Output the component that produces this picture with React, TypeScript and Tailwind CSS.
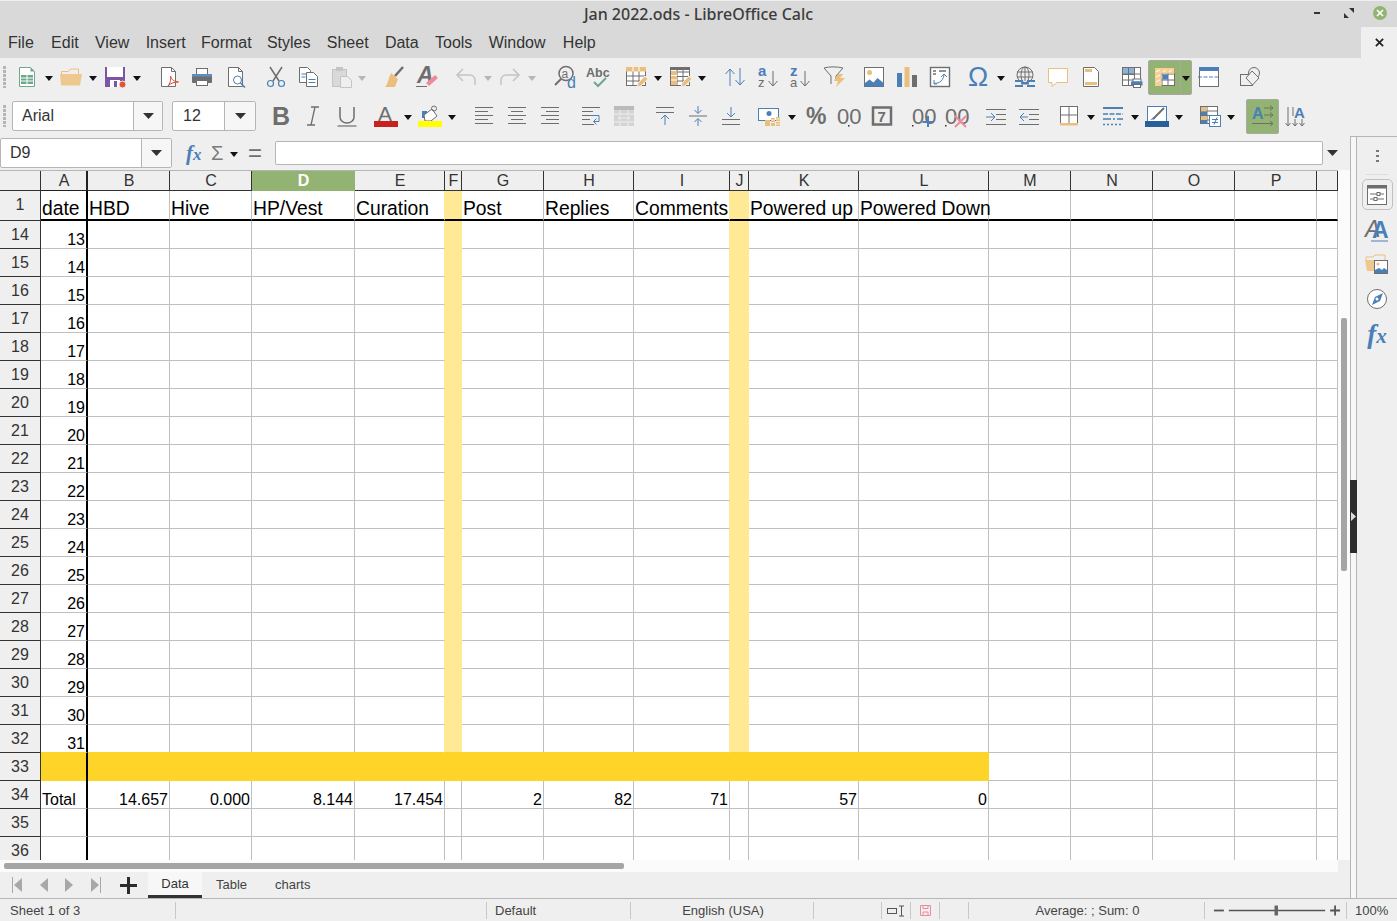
import React from "react";

const BLUE = "#4a7fb8";
const GRAY = "#6e6e6e";
const LIGHT = "#c4c4c4";
const ORANGE = "#eabf7e";
const PINK = "#ee8a9c";
const FONT = "'Liberation Sans', Arial, sans-serif";

const GRID =
  "grid grid-cols-[41px_47px_82px_82px_103px_90px_17px_82px_90px_96px_19px_110px_130px_82px_82px_82px_82px_21px]";

const columns = ["A", "B", "C", "D", "E", "F", "G", "H", "I", "J", "K", "L", "M", "N", "O", "P", ""];
const titles = ["date", "HBD", "Hive", "HP/Vest", "Curation", "", "Post", "Replies", "Comments", "", "Powered up", "Powered Down"];
const totals = ["Total", "14.657", "0.000", "8.144", "17.454", "", "2", "82", "71", "", "57", "0"];
const dateRows = Array.from({ length: 19 }, (_, i) => i + 14);

type IconProps = { className?: string; children?: React.ReactNode };

const Svg = ({ className = "", children }: IconProps) => (
  <svg viewBox="0 0 22 22" className={`w-[22px] h-[22px] shrink-0 overflow-visible ${className}`} fill="none">
    {children}
  </svg>
);

const Caret = ({ className = "" }: { className?: string }) => (
  <svg viewBox="0 0 8 5" className={`w-[8px] h-[5px] shrink-0 mt-[2px] ${className}`}>
    <path d="M0 0h8L4 5z" fill="#111" />
  </svg>
);

const BigCaret = ({ className = "" }: { className?: string }) => (
  <svg viewBox="0 0 11 6" className={`w-[11px] h-[6px] shrink-0 ${className}`}>
    <path d="M0 0h11L5.500 6z" fill="#333" />
  </svg>
);

const Grip = () => (
  <div className="w-[3px] h-[22px] shrink-0 bg-[repeating-linear-gradient(to_bottom,#b5b5b5_0,#b5b5b5_3px,transparent_3px,transparent_4px)]" />
);

const Label = ({ x, y, size, fill = GRAY, bold, italic, children }: any) => (
  <text x={x} y={y} fontSize={size} fill={fill} fontFamily={FONT} fontWeight={bold ? 700 : 400} fontStyle={italic ? "italic" : "normal"}>
    {children}
  </text>
);

const IconNew = (p: IconProps) => (
  <Svg {...p}>
    <path d="M3.500 1.500h11l4 4v15h-15z" fill="#fff" stroke="#6da88d" />
    <path d="M14.500 1.500v4h4z" fill="#6da88d" />
    <rect x="5" y="9" width="12" height="9" fill="#6da88d" />
    <path d="M5 12h12M5 15h12M11 9v9" stroke="#fff" />
  </Svg>
);
const IconOpen = (p: IconProps) => (
  <Svg {...p}>
    <path d="M1.500 8V5.500h7l2-2.500h8v5" stroke={ORANGE} />
    <path d="M0 8h22l-2 11.500H1z" fill="#efc890" />
  </Svg>
);
const IconSave = (p: IconProps) => (
  <Svg {...p}>
    <rect x="1" y="1" width="20" height="20" fill="#7c55a6" />
    <rect x="3" y="1" width="16" height="10" fill="#fff" />
    <rect x="6" y="14" width="10" height="7" fill="#fff" />
    <rect x="10" y="15" width="3" height="6" fill="#7c55a6" />
    <circle cx="18.500" cy="18.500" r="3.500" fill="#e2552e" stroke="#efefef" />
  </Svg>
);
const IconPdf = (p: IconProps) => (
  <Svg {...p}>
    <path d="M3.500 1.500h10l4 4v15h-14z" fill="#fff" stroke={GRAY} />
    <path d="M13.500 1.500v4h4" stroke={GRAY} />
    <path d="M10 20c3-4 3-8 2.500-10 1 4 4 5.500 8 6-4 0-8 1-10.500 4z" stroke="#d8432f" fill="#fff" />
  </Svg>
);
const IconPrint = (p: IconProps) => (
  <Svg {...p}>
    <rect x="5.500" y="2.500" width="11" height="6" fill="#fff" stroke={GRAY} />
    <rect x="1" y="8" width="20" height="9" rx="1" fill={GRAY} />
    <rect x="1" y="8" width="20" height="2.500" fill="#5e8fc4" />
    <rect x="5.500" y="14.500" width="11" height="5" fill="#fff" stroke={GRAY} />
  </Svg>
);
const IconPreview = (p: IconProps) => (
  <Svg {...p}>
    <path d="M3.500 1.500h10l4 4v15h-14z" fill="#fff" stroke={GRAY} />
    <path d="M13.500 1.500v4h4" stroke={GRAY} />
    <circle cx="12.500" cy="14" r="4" fill="#fff" stroke={BLUE} />
    <path d="M15.500 17l4.500 4.500" stroke={BLUE} strokeWidth="1.500" />
  </Svg>
);
const IconCut = (p: IconProps) => (
  <Svg {...p}>
    <path d="M5 1l9 14M17 1L8 15" stroke={GRAY} strokeWidth="1.500" />
    <circle cx="5.500" cy="17.500" r="3" stroke={BLUE} strokeWidth="1.200" />
    <circle cx="16.500" cy="17.500" r="3" stroke={BLUE} strokeWidth="1.200" />
  </Svg>
);
const IconCopy = (p: IconProps) => (
  <Svg {...p}>
    <path d="M1.500 1.500h8l3 3v12h-11z" fill="#fff" stroke={GRAY} />
    <path d="M8.500 6.500h7l4 4v10h-11z" fill="#fff" stroke={GRAY} />
    <path d="M3.500 8h5M3.500 11h4M10.500 13.500h7M10.500 16.500h7" stroke={BLUE} />
  </Svg>
);
const IconPaste = (p: IconProps) => (
  <Svg {...p}>
    <rect x="1.500" y="3.500" width="14" height="17" fill="#d9d9d9" stroke={LIGHT} />
    <rect x="5" y="1" width="7" height="4" fill={LIGHT} />
    <path d="M9.500 10.500h7l4 4v7h-11z" fill="#efefef" stroke={LIGHT} />
  </Svg>
);
const IconClone = (p: IconProps) => (
  <Svg {...p}>
    <path d="M21 1l-8 9" stroke={GRAY} strokeWidth="2.500" />
    <path d="M9 7l7 6-3 8H3c3-3 3-8 6-14z" fill={ORANGE} />
  </Svg>
);
const IconClear = (p: IconProps) => (
  <Svg {...p}>
    <Label x="1" y="17" size="23" bold italic>A</Label>
    <path d="M10 17l9-8 3 3-9 8z" fill={PINK} />
    <path d="M0 20.500h11" stroke={GRAY} />
  </Svg>
);
const IconUndo = (p: IconProps) => (
  <Svg {...p}>
    <path d="M20 19v-5a5 5 0 0 0-5-5H3M8 3L2 9l6 6" stroke={LIGHT} strokeWidth="1.500" />
  </Svg>
);
const IconRedo = (p: IconProps) => (
  <Svg {...p}>
    <path d="M2 19v-5a5 5 0 0 1 5-5h12M14 3l6 6-6 6" stroke={LIGHT} strokeWidth="1.500" />
  </Svg>
);
const IconFind = (p: IconProps) => (
  <Svg {...p}>
    <circle cx="12" cy="7.500" r="7" stroke={GRAY} strokeWidth="1.500" />
    <path d="M7 13l-6 6" stroke={GRAY} strokeWidth="2" />
    <Label x="7.500" y="11.500" size="12">a</Label>
    <Label x="13" y="22" size="16" fill={BLUE}>d</Label>
  </Svg>
);
const IconSpell = (p: IconProps) => (
  <Svg {...p}>
    <Label x="0" y="11" size="12.500" bold>Abc</Label>
    <path d="M8 16l4 4 8-8" stroke="#6da88d" strokeWidth="2" />
  </Svg>
);
const IconRows = (p: IconProps) => (
  <Svg {...p}>
    <rect x="1.500" y="1.500" width="19" height="18" fill="#fff" stroke={GRAY} />
    <path d="M1.500 10h19M1.500 15h19M8 5v15M14 5v15" stroke={GRAY} />
    <rect x="1" y="1" width="20" height="4.500" fill={ORANGE} />
    <path d="M8 1v4.500M14 1v4.500" stroke="#fff" />
    <path d="M12 21l1-4 7-7 3 3-7 7z" fill={ORANGE} stroke="#efefef" />
  </Svg>
);
const IconCols = (p: IconProps) => (
  <Svg {...p}>
    <rect x="1.500" y="1.500" width="19" height="18" fill="#fff" stroke={GRAY} />
    <path d="M8 1.500v18M14 1.500v18M8 6h12M8 10.500h12M8 15h12" stroke={GRAY} />
    <rect x="1" y="1" width="20" height="3" fill={GRAY} />
    <rect x="2" y="5" width="6" height="14" fill={ORANGE} />
    <path d="M2 9.500h6M2 14h6" stroke="#fff" />
    <path d="M12 21l1-4 7-7 3 3-7 7z" fill={ORANGE} stroke="#efefef" />
  </Svg>
);
const IconSort = (p: IconProps) => (
  <Svg {...p}>
    <path d="M6 20V3M1.500 8L6 3l4.500 5M16 2v17M11.500 14l4.500 5 4.500-5" stroke={BLUE} />
  </Svg>
);
const IconAz = (p: IconProps) => (
  <Svg {...p}>
    <Label x="1" y="10" size="15" fill={BLUE} bold>a</Label>
    <Label x="1" y="21" size="13">z</Label>
    <path d="M16 5v15M11.500 15l4.500 5 4.500-5" stroke={GRAY} />
  </Svg>
);
const IconZa = (p: IconProps) => (
  <Svg {...p}>
    <Label x="1" y="10" size="15" fill={BLUE} bold>z</Label>
    <Label x="1" y="21" size="13">a</Label>
    <path d="M16 5v15M11.500 15l4.500 5 4.500-5" stroke={GRAY} />
  </Svg>
);
const IconFilter = (p: IconProps) => (
  <Svg {...p}>
    <path d="M1 2c5-1.500 13-1.500 19 0l-7 8v5" stroke={GRAY} />
    <path d="M1 2l7 8v8" stroke={GRAY} />
    <path d="M15 8l5 0-3 4h5l-9 9 2-6h-4z" fill={ORANGE} />
  </Svg>
);
const IconImage = (p: IconProps) => (
  <Svg {...p}>
    <rect x="1.500" y="1.500" width="19" height="19" fill="#fff" stroke={GRAY} />
    <circle cx="6.500" cy="6.500" r="2.500" fill={ORANGE} />
    <path d="M1.500 20.500v-3l5-4 4 3 4-4.500 6 5v3.500z" fill={BLUE} />
  </Svg>
);
const IconChart = (p: IconProps) => (
  <Svg {...p}>
    <rect x="1" y="7" width="5" height="14" fill={BLUE} />
    <rect x="8.500" y="1" width="5" height="20" fill={ORANGE} />
    <rect x="16" y="9" width="5" height="12" fill={GRAY} />
  </Svg>
);
const IconPivot = (p: IconProps) => (
  <Svg {...p}>
    <rect x="1.500" y="1.500" width="19" height="19" fill="#fff" stroke={GRAY} strokeWidth="1.400" />
    <path d="M4 5h3M4 8h3M10 5h7" stroke={GRAY} strokeWidth="1.500" />
    <path d="M5 17c3 1 9-1 10-8M12 11l3-3 3 3M5 14v4h3" stroke={BLUE} />
  </Svg>
);
const IconOmega = (p: IconProps) => (
  <Svg {...p}>
    <Label x="0" y="20" size="27" fill={BLUE}>Ω</Label>
  </Svg>
);
const IconLink = (p: IconProps) => (
  <Svg {...p}>
    <circle cx="11" cy="9" r="8" stroke={GRAY} />
    <ellipse cx="11" cy="9" rx="4" ry="8" stroke={GRAY} />
    <path d="M3 6h16M3 11h16M11 1v14" stroke={GRAY} />
    <path d="M1 15h8M13 15h8M1 20h8M13 20h8M7 17.500h8" stroke={BLUE} strokeWidth="2" />
  </Svg>
);
const IconComment = (p: IconProps) => (
  <Svg {...p}>
    <path d="M1.500 2.500h19v14H10l-5 4v-4H1.500z" fill="#fff" stroke={ORANGE} />
  </Svg>
);
const IconHeader = (p: IconProps) => (
  <Svg {...p}>
    <path d="M3.500 1.500h11l4 4v15h-15z" fill="#fff" stroke={GRAY} />
    <rect x="5" y="3" width="7" height="3" fill={ORANGE} />
    <rect x="5" y="16" width="12" height="3" fill={ORANGE} />
  </Svg>
);
const IconPrintArea = (p: IconProps) => (
  <Svg {...p}>
    <rect x="1.500" y="1.500" width="18" height="18" fill="#fff" stroke={GRAY} />
    <rect x="1.500" y="1.500" width="12" height="7" fill="#8db2d9" stroke={GRAY} />
    <path d="M7.500 1.500v18M13.500 1.500v18M1.500 8h18M1.500 14h18" stroke={GRAY} />
    <rect x="12" y="13" width="8" height="3" fill="#fff" stroke={GRAY} />
    <rect x="10" y="15.500" width="11.500" height="4" fill={BLUE} />
    <rect x="12.500" y="18.500" width="7" height="3" fill="#fff" stroke={GRAY} />
  </Svg>
);
const IconFreeze = (p: IconProps) => (
  <Svg {...p}>
    <rect x="1.500" y="2.500" width="19" height="17" fill="#fff" stroke={GRAY} />
    <path d="M8 2.500v17M14 2.500v17M1.500 8h19M1.500 14h19" stroke={GRAY} />
    <path d="M1 2h6.500v18H1zM7.500 2h13v5.500h-13z" fill="#f5cf93" />
    <rect x="8.500" y="8.500" width="5.500" height="5" fill={BLUE} />
    <path d="M2 6l4-2M2 11l4-2M2 16l4-2M9 6l3-2M15 6l3-2" stroke="#fff" />
  </Svg>
);
const IconSplit = (p: IconProps) => (
  <Svg {...p}>
    <rect x="1.500" y="1.500" width="19" height="19" fill="#fff" stroke={GRAY} />
    <rect x="1" y="1" width="20" height="4" fill={BLUE} />
    <path d="M0 11h22" stroke={BLUE} strokeDasharray="4 1.500" />
  </Svg>
);
const IconShapes = (p: IconProps) => (
  <Svg {...p}>
    <circle cx="15" cy="7" r="5.500" fill="#efefef" stroke={GRAY} />
    <rect x="1.500" y="8.500" width="12" height="11" fill="#efefef" stroke={GRAY} />
    <path d="M13 5l7 7-6.500 7L7 12z" fill="#efefef" stroke={GRAY} />
  </Svg>
);

const IconBold = (p: IconProps) => (
  <Svg {...p}>
    <Label x="2" y="20" size="25" bold>B</Label>
  </Svg>
);
const IconItalic = (p: IconProps) => (
  <Svg {...p}>
    <path d="M9 2h8M5 20h8M13 2L9 20" stroke={GRAY} strokeWidth="1.300" />
  </Svg>
);
const IconUnderline = (p: IconProps) => (
  <Svg {...p}>
    <path d="M4 2v10a7 6 0 0 0 14 0V2" stroke={GRAY} strokeWidth="1.500" />
    <path d="M1.500 21h19" stroke={GRAY} strokeWidth="1.200" />
  </Svg>
);
const IconFontColor = (p: IconProps) => (
  <Svg {...p}>
    <Label x="3" y="16" size="21">A</Label>
    <rect x="-1" y="16" width="24" height="6" fill="#c9211e" />
  </Svg>
);
const IconHighlight = (p: IconProps) => (
  <Svg {...p}>
    <rect x="3" y="6" width="5" height="7" fill={BLUE} />
    <path d="M5 10l8-6 5 7-6 5H6z" fill="#fff" stroke={GRAY} />
    <circle cx="15" cy="3.500" r="2.500" stroke={GRAY} />
    <rect x="-1" y="16" width="24" height="6" fill="#ffff00" />
  </Svg>
);
const IconAlignLeft = (p: IconProps) => (
  <Svg {...p}>
    <path d="M2 2.500h18M2 6.500h13M2 10.500h18M2 14.500h13M2 18.500h18" stroke={GRAY} />
  </Svg>
);
const IconAlignCenter = (p: IconProps) => (
  <Svg {...p}>
    <path d="M2 2.500h18M5 6.500h12M2 10.500h18M5 14.500h12M2 18.500h18" stroke={GRAY} />
  </Svg>
);
const IconAlignRight = (p: IconProps) => (
  <Svg {...p}>
    <path d="M2 2.500h18M7 6.500h13M2 10.500h18M7 14.500h13M2 18.500h18" stroke={GRAY} />
  </Svg>
);
const IconWrap = (p: IconProps) => (
  <Svg {...p}>
    <path d="M2 2.500h18M2 6.500h11M2 10.500h8M2 14.500h8M2 19.500h12" stroke={GRAY} />
    <path d="M10 10.500h9v6h-5M16.500 13.500l-3 3 3 3" stroke={BLUE} />
  </Svg>
);
const IconMerge = (p: IconProps) => (
  <Svg {...p}>
    <rect x="1" y="1" width="20" height="20" fill="#d4d4d4" />
    <rect x="1" y="1" width="20" height="4" fill="#bbbbbb" />
    <path d="M1 9h20M1 17h20M7 5v4M15 5v4M7 17v4M15 17v4" stroke="#efefef" />
    <path d="M5 13h12M8 10.500L5 13l3 2.500M14 10.500l3 2.500-3 2.500" stroke="#efefef" />
  </Svg>
);
const IconAlignTop = (p: IconProps) => (
  <Svg {...p}>
    <path d="M2 2.500h18M2 7.500h18" stroke={GRAY} />
    <path d="M11 20V10M7 14l4-4 4 4" stroke={BLUE} />
  </Svg>
);
const IconAlignMid = (p: IconProps) => (
  <Svg {...p}>
    <path d="M2 11h18" stroke={GRAY} />
    <path d="M11 1v7M7.500 5L11 8.500 14.500 5M11 21v-7M7.500 17l3.500-3.500 3.500 3.500" stroke={BLUE} />
  </Svg>
);
const IconAlignBottom = (p: IconProps) => (
  <Svg {...p}>
    <path d="M2 14.500h18M2 19.500h18" stroke={GRAY} />
    <path d="M11 2v10M7 8l4 4 4-4" stroke={BLUE} />
  </Svg>
);
const IconCurrency = (p: IconProps) => (
  <Svg {...p}>
    <rect x="0.500" y="3.500" width="20" height="12" fill="#fff" stroke={BLUE} />
    <circle cx="11" cy="8.500" r="2.500" fill={BLUE} />
    <path d="M7 15h5v6H7zM13 13h4v8h-4zM18 12h4v9h-4z" fill={ORANGE} />
    <path d="M13 15h4M13 17.500h4M18 14h4M18 16.500h4M18 19h4" stroke="#fff" strokeWidth="0.700" />
  </Svg>
);
const IconPercent = (p: IconProps) => (
  <Svg {...p}>
    <Label x="1" y="19" size="23" bold>%</Label>
  </Svg>
);
const IconNumber = (p: IconProps) => (
  <Svg {...p}>
    <Label x="-1" y="19" size="22">00</Label>
    <rect x="10" y="20" width="1.500" height="1.500" fill="#333" />
  </Svg>
);
const IconDate = (p: IconProps) => (
  <Svg {...p}>
    <rect x="2" y="2.500" width="18" height="17" stroke={GRAY} strokeWidth="2.500" />
    <Label x="6.500" y="16.500" size="15" bold>7</Label>
  </Svg>
);
const IconAddDec = (p: IconProps) => (
  <Svg {...p}>
    <Label x="0" y="19" size="22">00</Label>
    <rect x="0" y="20" width="1.500" height="1.500" fill="#333" />
    <path d="M16 11v11M10.500 17h11" stroke={BLUE} strokeWidth="2" />
  </Svg>
);
const IconRemDec = (p: IconProps) => (
  <Svg {...p}>
    <Label x="0" y="19" size="22">00</Label>
    <rect x="0" y="20" width="1.500" height="1.500" fill="#333" />
    <path d="M10 11l11 11M21 11L10 22" stroke={PINK} strokeWidth="2" />
  </Svg>
);
const IconIndent = (p: IconProps) => (
  <Svg {...p}>
    <path d="M1 4.500h20M11 9.500h10M11 14.500h10M1 19.500h20" stroke={GRAY} />
    <path d="M1 12h8M6 8l4 4-4 4" stroke={BLUE} />
  </Svg>
);
const IconOutdent = (p: IconProps) => (
  <Svg {...p}>
    <path d="M1 4.500h20M11 9.500h10M11 14.500h10M1 19.500h20" stroke={GRAY} />
    <path d="M10 12H2M6 8l-4 4 4 4" stroke={BLUE} />
  </Svg>
);
const IconBorder = (p: IconProps) => (
  <Svg {...p}>
    <rect x="2.500" y="1.500" width="17" height="17" fill="#fff" stroke={GRAY} />
    <path d="M11 1.500v17M2.500 10h17" stroke={GRAY} />
    <rect x="2" y="18" width="18" height="2.500" fill={ORANGE} />
  </Svg>
);
const IconBorderStyle = (p: IconProps) => (
  <Svg {...p}>
    <path d="M1 3h20" stroke={BLUE} strokeWidth="2" />
    <path d="M1 9h20" stroke={BLUE} strokeWidth="1.500" strokeDasharray="5 1.500" />
    <path d="M1 14h20" stroke={BLUE} strokeWidth="1.500" strokeDasharray="8 2 2 2" />
    <path d="M1 19.500h20" stroke={BLUE} strokeWidth="1.500" strokeDasharray="2 2" />
  </Svg>
);
const IconBorderColor = (p: IconProps) => (
  <Svg {...p}>
    <rect x="1.500" y="1.500" width="19" height="15" fill="#fff" stroke={BLUE} />
    <path d="M18 3L7 14" stroke={GRAY} strokeWidth="2" />
    <path d="M4 15l4-3 1 2z" fill={BLUE} />
    <rect x="-1" y="16" width="24" height="6" fill="#2a6099" />
  </Svg>
);
const IconCond = (p: IconProps) => (
  <Svg {...p}>
    <rect x="1.500" y="1.500" width="17" height="17" fill="#fff" stroke={GRAY} />
    <path d="M8 1.500v17M1.500 6h17M1.500 10.500h17M1.500 15h17" stroke={GRAY} />
    <rect x="2" y="2" width="6" height="4" fill={ORANGE} />
    <rect x="2" y="6.500" width="6" height="4" fill={BLUE} />
    <rect x="2" y="11" width="6" height="4" fill={ORANGE} />
    <rect x="2" y="15" width="6" height="3.500" fill={BLUE} />
    <rect x="10.500" y="10.500" width="11" height="11" fill="#fff" stroke={BLUE} />
    <path d="M13 14.500h6M13 17.500h6M18 12.500l-3 7" stroke={BLUE} />
  </Svg>
);
const IconTextLtr = (p: IconProps) => (
  <Svg {...p}>
    <Label x="0" y="14" size="16" fill={BLUE} bold>A</Label>
    <path d="M12 3h9M18 0.500L21 3l-3 2.500M12 10h9M18 7.500l3 2.500-3 2.500M0 18.500h21M18 16l3 2.500-3 2.500" stroke={GRAY} />
  </Svg>
);
const IconTextVert = (p: IconProps) => (
  <Svg {...p}>
    <Label x="9" y="13" size="15" fill={BLUE} bold>A</Label>
    <path d="M3 2v19M0.500 18L3 21l2.500-3M10 14v7M7.500 18l2.500 3 2.500-3M17 14v7M14.500 18l2.500 3 2.500-3M8 2v9" stroke={GRAY} />
  </Svg>
);

const IconDeck = () => (
  <svg viewBox="0 0 20 20" className="w-[20px] h-[20px]" fill="none">
    <rect x="0.500" y="0.500" width="19" height="19" fill="#fff" stroke={GRAY} />
    <rect x="0" y="0" width="20" height="3.500" fill={GRAY} />
    <path d="M3 9h14M3 14h14" stroke={GRAY} />
    <rect x="10" y="7.500" width="3" height="3" fill="#fff" stroke={GRAY} />
    <rect x="7" y="12.500" width="3" height="3" fill="#fff" stroke={GRAY} />
  </svg>
);
const IconStyles = () => (
  <svg viewBox="0 0 22 24" className="w-[22px] h-[24px] overflow-visible" fill="none">
    <text x="-1" y="19" fontSize="23" fill={GRAY} fontFamily={FONT} fontStyle="italic">A</text>
    <text x="6" y="20" fontSize="23" fill={BLUE} fontFamily={FONT} fontWeight="700">A</text>
    <path d="M5 23h17" stroke={BLUE} />
  </svg>
);
const IconGallery = () => (
  <svg viewBox="0 0 24 22" className="w-[24px] h-[22px]" fill="none">
    <path d="M1 8V5h7l2-2h10v5" stroke={ORANGE} />
    <path d="M0 8h20l-2 11H2z" fill="#efc890" />
    <rect x="9.500" y="8.500" width="13" height="13" fill="#fff" stroke={GRAY} />
    <circle cx="13" cy="12" r="1.500" fill={ORANGE} />
    <path d="M10 21v-3l4-2 3 2 2-2 3 2v3z" fill={BLUE} />
  </svg>
);
const IconNavigator = () => (
  <svg viewBox="0 0 22 22" className="w-[22px] h-[22px]" fill="none">
    <circle cx="11" cy="11" r="9.500" fill="#fff" stroke={GRAY} />
    <path d="M17 5l-3 8-8 4 3-8z" fill={BLUE} />
    <circle cx="11" cy="11" r="1.500" fill="#fff" />
  </svg>
);

const ToolbarOne = () => (
  <div className="h-[38px] flex items-center pl-[3px] bg-[#efefef]">
    <Grip />
    <IconNew className="ml-[10px]" />
    <Caret className="ml-[7px]" />
    <IconOpen className="ml-[7px]" />
    <Caret className="ml-[7px]" />
    <IconSave className="ml-[7px]" />
    <Caret className="ml-[7px]" />
    <IconPdf className="ml-[17px]" />
    <IconPrint className="ml-[11px]" />
    <IconPreview className="ml-[12px]" />
    <IconCut className="ml-[18px]" />
    <IconCopy className="ml-[11px]" />
    <IconPaste className="ml-[11px]" />
    <Caret className="ml-[5px] opacity-25" />
    <IconClone className="ml-[16px]" />
    <IconClear className="ml-[12px]" />
    <IconUndo className="ml-[17px]" />
    <Caret className="ml-[7px] opacity-25" />
    <IconRedo className="ml-[7px]" />
    <Caret className="ml-[7px] opacity-25" />
    <IconFind className="ml-[18px]" />
    <IconSpell className="ml-[10px]" />
    <IconRows className="ml-[17px]" />
    <Caret className="ml-[7px]" />
    <IconCols className="ml-[7px]" />
    <Caret className="ml-[7px]" />
    <IconSort className="ml-[18px]" />
    <IconAz className="ml-[11px]" />
    <IconZa className="ml-[10px]" />
    <IconFilter className="ml-[12px]" />
    <IconImage className="ml-[18px]" />
    <IconChart className="ml-[11px]" />
    <IconPivot className="ml-[11px]" />
    <IconOmega className="ml-[17px]" />
    <Caret className="ml-[7px]" />
    <IconLink className="ml-[9px]" />
    <IconComment className="ml-[11px]" />
    <IconHeader className="ml-[11px]" />
    <IconPrintArea className="ml-[19px]" />
    <div className="ml-[5px] flex h-[35px] rounded-[2px] border border-[#a8a8a8] bg-[#92b372]">
      <div className="w-[32px] flex items-center justify-center border-r border-[#a8a8a8]">
        <IconFreeze />
      </div>
      <div className="w-[10px] flex items-center justify-center">
        <Caret />
      </div>
    </div>
    <IconSplit className="ml-[6px]" />
    <IconShapes className="ml-[19px]" />
  </div>
);

const Combo = ({ text, className, labelClass }: { text: string; className: string; labelClass: string }) => (
  <div className={`flex h-[30px] rounded-[2px] border border-[#b5b5b5] bg-white text-[16px] text-[#333] ${className}`}>
    <div className={`flex items-center border-r border-[#b5b5b5] ${labelClass}`}>{text}</div>
    <div className="flex-1 flex items-center justify-center bg-[#f6f6f6]">
      <BigCaret />
    </div>
  </div>
);

const ToolbarTwo = () => (
  <div className="h-[40px] flex items-center pl-[3px] bg-[#efefef]">
    <Grip />
    <Combo text="Arial" className="ml-[6px] w-[151px]" labelClass="w-[121px] pl-[9px]" />
    <Combo text="12" className="ml-[9px] w-[84px]" labelClass="w-[52px] pl-[10px]" />
    <IconBold className="ml-[14px]" />
    <IconItalic className="ml-[10px]" />
    <IconUnderline className="ml-[12px]" />
    <IconFontColor className="ml-[17px]" />
    <Caret className="ml-[7px]" />
    <IconHighlight className="ml-[7px]" />
    <Caret className="ml-[7px]" />
    <IconAlignLeft className="ml-[17px]" />
    <IconAlignCenter className="ml-[11px]" />
    <IconAlignRight className="ml-[11px]" />
    <IconWrap className="ml-[19px]" />
    <IconMerge className="ml-[11px]" />
    <IconAlignTop className="ml-[19px]" />
    <IconAlignMid className="ml-[11px]" />
    <IconAlignBottom className="ml-[11px]" />
    <IconCurrency className="ml-[16px]" />
    <Caret className="ml-[8px]" />
    <IconPercent className="ml-[9px]" />
    <IconNumber className="ml-[11px]" />
    <IconDate className="ml-[11px]" />
    <IconAddDec className="ml-[19px]" />
    <IconRemDec className="ml-[11px]" />
    <IconIndent className="ml-[18px]" />
    <IconOutdent className="ml-[11px]" />
    <IconBorder className="ml-[18px]" />
    <Caret className="ml-[7px]" />
    <IconBorderStyle className="ml-[7px]" />
    <Caret className="ml-[7px]" />
    <IconBorderColor className="ml-[7px]" />
    <Caret className="ml-[7px]" />
    <IconCond className="ml-[16px]" />
    <Caret className="ml-[6px]" />
    <div className="ml-[11px] w-[33px] h-[35px] flex items-center justify-center rounded-[2px] border border-[#a8a8a8] bg-[#92b372]">
      <IconTextLtr />
    </div>
    <IconTextVert className="ml-[6px]" />
  </div>
);

const FormulaBar = () => (
  <div className="h-[34px] flex items-center bg-[#efefef]">
    <div className="w-[172px] h-[30px] flex rounded-[2px] border border-[#b5b5b5] bg-white text-[16px] text-[#333]">
      <div className="w-[141px] flex items-center pl-[9px] border-r border-[#b5b5b5]">D9</div>
      <div className="flex-1 flex items-center justify-center bg-[#f6f6f6]">
        <BigCaret />
      </div>
    </div>
    <span className="ml-[14px] w-[17px] flex items-baseline italic font-bold leading-none text-[#4a7fb8] font-['Liberation_Serif',serif]">
      <span className="text-[21px]">f</span>
      <span className="text-[17px]">x</span>
    </span>
    <span className="ml-[8px] w-[13px] text-[20px] leading-none text-[#7a7a7a]">Σ</span>
    <Caret className="ml-[6px]" />
    <span className="ml-[10px] w-[14px] text-[24px] leading-none text-[#6e6e6e]">=</span>
    <div className="ml-[13px] w-[1048px] h-[24px] rounded-[2px] border border-[#b5b5b5] bg-white" />
    <BigCaret className="ml-[4px]" />
  </div>
);

const ColumnHeader = () => (
  <div className={`${GRID} h-[21px] border-t border-[#b5b5b5] bg-[#efefef] text-[16px] leading-[18px] text-[#333]`}>
    <div className="border-r border-b border-[#333]" />
    {columns.map((c, i) =>
      c === "D" ? (
        <div key={i} className="flex items-center justify-center border-b border-[#92b372] bg-[#92b372] font-bold text-white">
          {c}
        </div>
      ) : c === "A" ? (
        <div key={i} className="flex items-center justify-center pl-[1px] border-r-2 border-b border-[#222]">
          {c}
        </div>
      ) : (
        <div key={i} className="flex items-center justify-center pl-[1px] border-r border-b border-[#333]">
          {c}
        </div>
      )
    )}
  </div>
);

const RowLabel = ({ n }: { n: number }) => (
  <div className="flex items-center justify-center border-r border-b border-[#333] bg-[#efefef] text-[16px] text-[#333]">{n}</div>
);

const TitleRow = () => (
  <div className={`${GRID} h-[30px]`}>
    <div className="flex items-center justify-center pb-[2px] border-r border-b border-[#333] bg-[#efefef] text-[16px] text-[#333]">1</div>
    {columns.map((c, i) => {
      const yellow = c === "F" || c === "J";
      const beforeYellow = c === "E" || c === "I";
      return (
        <div
          key={i}
          className={`flex items-end whitespace-nowrap pl-[1px] text-[19.300px] leading-[20px] text-black border-b-2 border-b-black ${
            yellow
              ? "bg-[#ffe994]"
              : c === "A"
                ? "border-r-2 border-r-black"
                : beforeYellow
                  ? "border-r border-r-[#ffe994]"
                  : "border-r border-r-[#c0c0c0]"
          }`}
        >
          {titles[i]}
        </div>
      );
    })}
  </div>
);

const DateRow = ({ n }: { n: number }) => (
  <div className={`${GRID} h-[28px]`}>
    <RowLabel n={n} />
    {columns.map((c, i) => {
      const last = n === 32 && i < 12;
      const bottom = last ? "border-b border-b-[#ffd428]" : "border-b border-b-[#c0c0c0]";
      if (c === "F" || c === "J") {
        return <div key={i} className={`bg-[#ffe994] ${last ? "border-b border-b-[#ffd428]" : ""}`} />;
      }
      if (c === "A") {
        return (
          <div key={i} className={`flex items-end justify-end pr-[1px] text-[16px] leading-[16px] text-black border-r-2 border-r-black ${bottom}`}>
            {n - 1}
          </div>
        );
      }
      if (c === "E" || c === "I") {
        return <div key={i} className={`border-r border-r-[#ffe994] ${bottom}`} />;
      }
      return <div key={i} className={`border-r border-r-[#c0c0c0] ${bottom}`} />;
    })}
  </div>
);

const BandRow = () => (
  <div className={`${GRID} h-[28px]`}>
    <RowLabel n={33} />
    {columns.map((c, i) =>
      c === "A" ? (
        <div key={i} className="bg-[#ffd428] border-r-2 border-r-black" />
      ) : i < 12 ? (
        <div key={i} className="bg-[#ffd428]" />
      ) : (
        <div key={i} className="border-r border-b border-[#c0c0c0]" />
      )
    )}
  </div>
);

const TotalRow = () => (
  <div className={`${GRID} h-[28px]`}>
    <RowLabel n={34} />
    {columns.map((c, i) =>
      c === "A" ? (
        <div key={i} className="flex items-end pl-[1px] text-[16px] leading-[16px] text-black border-r-2 border-r-black border-b border-b-[#c0c0c0]">
          {totals[i]}
        </div>
      ) : (
        <div key={i} className="flex items-end justify-end pr-[1px] text-[16px] leading-[16px] text-black border-r border-b border-[#c0c0c0]">
          {totals[i] ?? ""}
        </div>
      )
    )}
  </div>
);

const EmptyRow = ({ n }: { n: number }) => (
  <div className={`${GRID} h-[28px]`}>
    <RowLabel n={n} />
    {columns.map((c, i) =>
      c === "A" ? (
        <div key={i} className="border-r-2 border-r-black border-b border-b-[#c0c0c0]" />
      ) : (
        <div key={i} className="border-r border-b border-[#c0c0c0]" />
      )
    )}
  </div>
);

const Sheet = () => (
  <div className="h-[690px] flex">
    <div className="w-[1338px] h-full overflow-hidden bg-white">
      <ColumnHeader />
      <TitleRow />
      {dateRows.map((n) => (
        <DateRow key={n} n={n} />
      ))}
      <BandRow />
      <TotalRow />
      <EmptyRow n={35} />
      <EmptyRow n={36} />
    </div>
    <div className="w-[12px] h-full bg-[#fbfbfb] pt-[148px] pl-[3px]">
      <div className="w-[6px] h-[253px] rounded-[2px] bg-[#a5a5a5]" />
    </div>
  </div>
);

const NavIcon = ({ d, bar, className = "" }: { d: string; bar?: "l" | "r"; className?: string }) => (
  <svg viewBox="0 0 12 16" className={`w-[12px] h-[16px] ${className}`}>
    <path d={d} fill="#a8a8a8" />
    {bar === "l" && <rect x="0" y="0" width="1" height="16" fill="#a8a8a8" />}
    {bar === "r" && <rect x="11" y="0" width="1" height="16" fill="#a8a8a8" />}
  </svg>
);

const Tabs = () => (
  <div className="h-[26px] flex items-stretch bg-[#efefef] text-[13px] text-[#444]">
    <div className="w-[148px] flex items-center pl-[12px]">
      <NavIcon d="M2 8l8-7v14z" bar="l" />
      <NavIcon d="M2 8l8-7v14z" className="ml-[14px]" />
      <NavIcon d="M3 1l8 7-8 7z" className="ml-[12px]" />
      <NavIcon d="M2 1l8 7-8 7z" bar="r" className="ml-[15px]" />
      <svg viewBox="0 0 17 17" className="ml-[19px] w-[17px] h-[17px]">
        <path d="M8.500 0v17M0 8.500h17" stroke="#2b2b2b" strokeWidth="3" />
      </svg>
    </div>
    <div className="w-[54px] flex items-center justify-center bg-[#f7f7f7] border-b-[3px] border-[#333] text-[#333]">Data</div>
    <div className="ml-[14px] flex items-center">Table</div>
    <div className="ml-[28px] flex items-center">charts</div>
  </div>
);

const StatusSep = ({ className, children }: { className: string; children?: React.ReactNode }) => (
  <div className={`h-[17px] flex items-center border-l border-[#c8c8c8] ${className}`}>{children}</div>
);

const StatusBar = () => (
  <div className="h-[23px] flex items-center pt-[1px] border-t border-[#b5b5b5] bg-[#efefef] text-[13px] text-[#444]">
    <div className="w-[175px] pl-[10px]">Sheet 1 of 3</div>
    <StatusSep className="w-[311px]" />
    <StatusSep className="w-[144px] pl-[8px]">Default</StatusSep>
    <StatusSep className="w-[183px] justify-center pl-[2px]">English (USA)</StatusSep>
    <StatusSep className="w-[68px]" />
    <StatusSep className="w-[29px] justify-center">
      <svg viewBox="0 0 18 12" className="w-[18px] h-[12px]" fill="none">
        <rect x="0.500" y="3.500" width="9" height="5" stroke="#555" />
        <path d="M12 1h5M14.500 1v10M12 11h5" stroke="#555" />
      </svg>
    </StatusSep>
    <StatusSep className="w-[29px] justify-center">
      <svg viewBox="0 0 11 11" className="w-[11px] h-[11px]" fill="none">
        <path d="M0.500 0.500h10v10h-10z" stroke="#ee8a9c" />
        <path d="M3 0.500v3h5v-3M3 10.500V7h5v3.500" stroke="#ee8a9c" />
      </svg>
    </StatusSep>
    <StatusSep className="w-[29px]" />
    <StatusSep className="w-[236px] justify-center pl-[2px]">Average: ; Sum: 0</StatusSep>
    <StatusSep className="w-[142px]">
      <svg viewBox="0 0 142 17" className="w-[142px] h-[17px]" fill="none">
        <path d="M24 8.500h97" stroke="#555" strokeWidth="1.300" />
        <path d="M126 8.500h10M131 3.500v10" stroke="#555" strokeWidth="1.800" />
        <path d="M9 8.500h10" stroke="#555" strokeWidth="1.800" />
        <rect x="70" y="3.500" width="3.500" height="10" fill="#666" />
      </svg>
    </StatusSep>
    <StatusSep className="flex-1 pl-[8px]">100%</StatusSep>
  </div>
);

const Sidebar = () => (
  <div className="w-[47px] flex border-t border-[#b5b5b5] bg-[#efefef]">
    <div className="w-[7px] border-x border-[#b5b5b5] bg-[#f7f7f7]" />
    <div className="w-[40px] flex flex-col items-center pt-[13px]">
      <div className="flex flex-col gap-[3px]">
        <div className="w-[3px] h-[2px] bg-[#777]" />
        <div className="w-[3px] h-[2px] bg-[#777]" />
        <div className="w-[3px] h-[2px] bg-[#777]" />
      </div>
      <div className="mt-[12px] w-[22px] h-px bg-[#dcdcdc]" />
      <div className="mt-[4px] w-[31px] h-[31px] flex items-center justify-center rounded-[5px] border border-[#c0c0c0]">
        <IconDeck />
      </div>
      <div className="mt-[8px] h-[24px]"><IconStyles /></div>
      <div className="mt-[10px] h-[22px]"><IconGallery /></div>
      <div className="mt-[14px] h-[22px]"><IconNavigator /></div>
      <span className="mt-[9px] flex items-baseline italic font-bold leading-[30px] text-[#4a7fb8] font-['Liberation_Serif',serif]">
        <span className="text-[27px]">f</span>
        <span className="text-[21px]">x</span>
      </span>
    </div>
  </div>
);

export default function App() {
  return (
    <div className="relative w-[1397px] h-[921px] overflow-hidden bg-[#efefef] font-['Liberation_Sans',Arial,sans-serif]">
      <div className="h-[27px] flex items-center justify-center border-t border-[#efefef] bg-[#d9d9d9] relative">
        <span className="font-['Noto_Sans',sans-serif] font-medium text-[16px] text-[#3c3c3c]">Jan 2022.ods - LibreOffice Calc</span>
        <div className="absolute right-[10px] top-[5px] flex items-center">
          <svg viewBox="0 0 10 10" className="w-[10px] h-[10px]">
            <rect x="2" y="4" width="6" height="2" fill="#333" />
          </svg>
          <svg viewBox="0 0 10 10" className="ml-[22px] w-[10px] h-[10px]">
            <path d="M5 0h5v5zM5 10H0V5z" fill="#333" />
          </svg>
          <div className="ml-[19px] w-[14px] h-[14px] rounded-full bg-[#92b372] flex items-center justify-center">
            <svg viewBox="0 0 8 8" className="w-[8px] h-[8px]">
              <path d="M1 1l6 6M7 1L1 7" stroke="#fff" strokeWidth="1.600" />
            </svg>
          </div>
        </div>
      </div>
      <div className="h-[31px] flex items-center bg-[#d9d9d9]">
        <div className="flex-1 flex items-center pl-[8px] text-[16px] text-[#333]">
          <span>File</span>
          <span className="ml-[17.300px]">Edit</span>
          <span className="ml-[16.300px]">View</span>
          <span className="ml-[16.300px]">Insert</span>
          <span className="ml-[15.300px]">Format</span>
          <span className="ml-[15.300px]">Styles</span>
          <span className="ml-[16.300px]">Sheet</span>
          <span className="ml-[16.300px]">Data</span>
          <span className="ml-[16.300px]">Tools</span>
          <span className="ml-[16.300px]">Window</span>
          <span className="ml-[17.300px]">Help</span>
        </div>
        <div className="w-[36px] h-full flex items-center justify-center bg-[#efefef]">
          <svg viewBox="0 0 10 10" className="w-[9px] h-[9px]">
            <path d="M1 1l8 8M9 1l-8 8" stroke="#222" strokeWidth="2" />
          </svg>
        </div>
      </div>
      <ToolbarOne />
      <ToolbarTwo />
      <div className="h-[762px] flex">
        <div className="w-[1350px] flex flex-col">
          <FormulaBar />
          <Sheet />
          <div className="h-[12px] w-[1338px] bg-[#fbfbfb] pt-[3px] pl-[4px]">
            <div className="w-[620px] h-[6px] rounded-[2px] bg-[#a5a5a5]" />
          </div>
          <Tabs />
        </div>
        <Sidebar />
      </div>
      <StatusBar />
      <div className="absolute left-[1350px] top-[480px] w-[7px] h-[73px] flex items-center justify-center bg-[#2d2d2d]">
        <svg viewBox="0 0 5 9" className="w-[5px] h-[9px]">
          <path d="M0 0l5 4.500L0 9z" fill="#ddd" />
        </svg>
      </div>
    </div>
  );
}
